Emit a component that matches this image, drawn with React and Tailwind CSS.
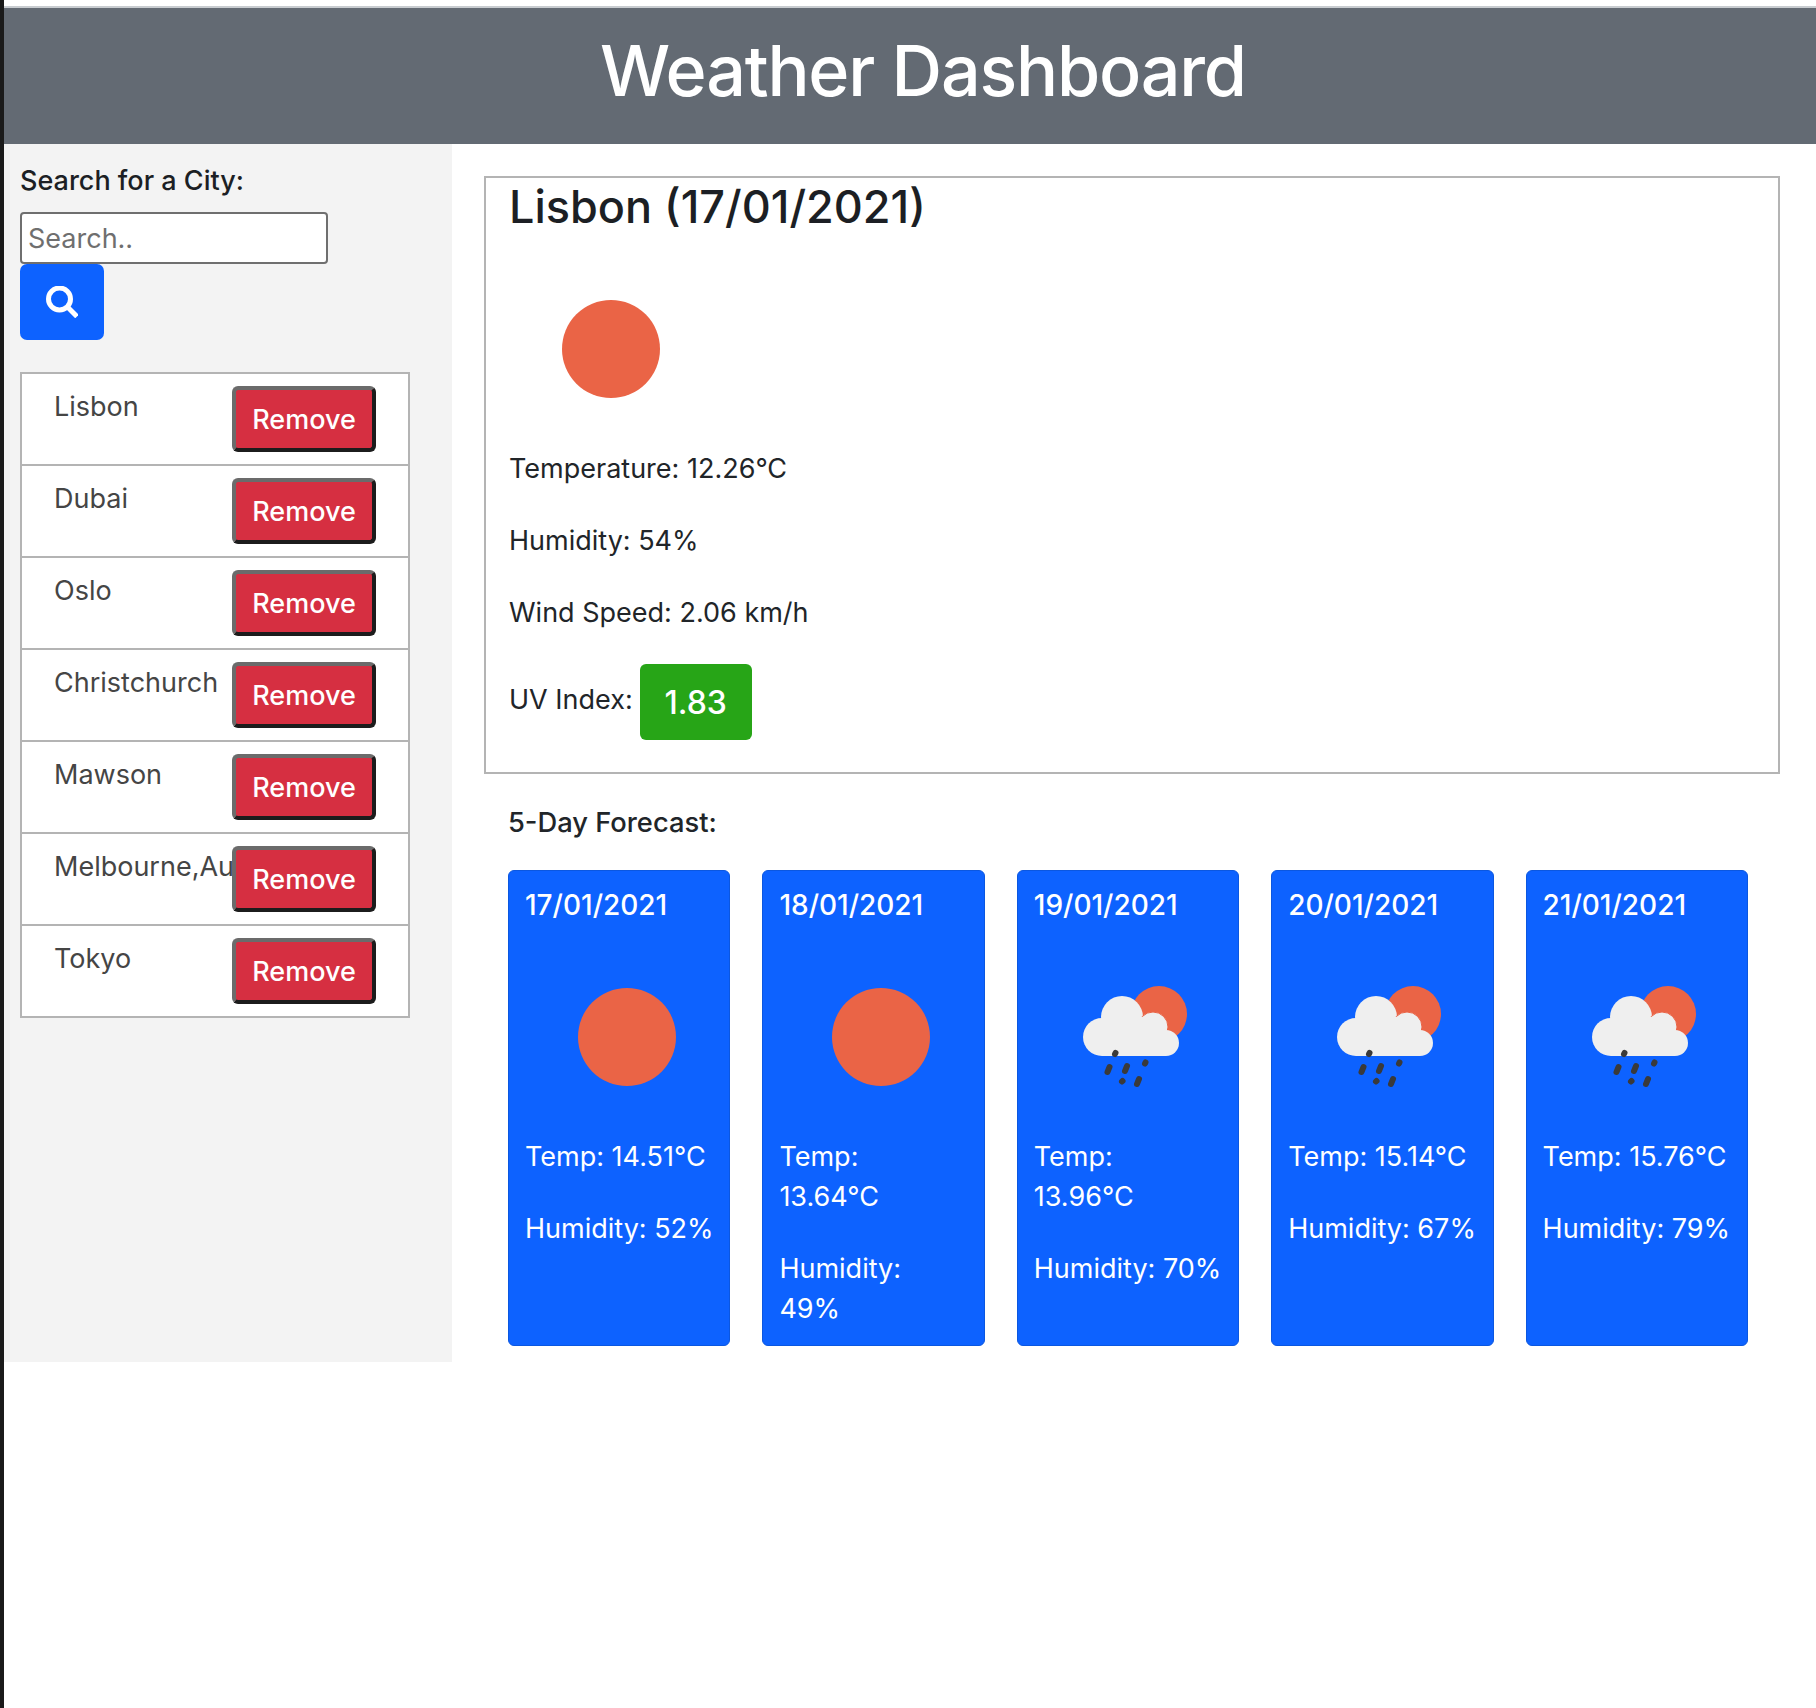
const cities = ['Lisbon', 'Dubai', 'Oslo', 'Christchurch', 'Mawson', 'Melbourne,Australia', 'Tokyo'];

const forecast = [
  { date: '17/01/2021', icon: 'sun', temp: ['Temp: 14.51°C'], humidity: ['Humidity: 52%'] },
  { date: '18/01/2021', icon: 'sun', temp: ['Temp:', '13.64°C'], humidity: ['Humidity:', '49%'] },
  { date: '19/01/2021', icon: 'rain', temp: ['Temp:', '13.96°C'], humidity: ['Humidity: 70%'] },
  { date: '20/01/2021', icon: 'rain', temp: ['Temp: 15.14°C'], humidity: ['Humidity: 67%'] },
  { date: '21/01/2021', icon: 'rain', temp: ['Temp: 15.76°C'], humidity: ['Humidity: 79%'] },
];

const SunIcon = () => (
  <svg width="200" height="200" viewBox="0 0 200 200" className="block shrink-0">
    <circle cx="102" cy="100" r="49" fill="#ea6446" />
  </svg>
);

const RainIcon = () => (
  <svg width="200" height="200" viewBox="0 0 200 200" className="block shrink-0">
    <circle cx="125" cy="77" r="28" fill="#ea6446" />
    <g fill="#efefef">
      <circle cx="88" cy="80" r="21" />
      <circle cx="119" cy="90" r="15" stroke="#ea6446" strokeWidth="1" />
      <circle cx="68" cy="100" r="19" />
      <circle cx="132" cy="106" r="13" />
      <rect x="68" y="93" width="64" height="26" />
      <rect x="69" y="80" width="40" height="20" />
    </g>
    <g stroke="#3a3a3a" strokeWidth="6" strokeLinecap="round">
      <line x1="81.5" y1="116" x2="81" y2="117" />
      <line x1="75.5" y1="130" x2="73.5" y2="135" />
      <line x1="93" y1="129" x2="91" y2="134" />
      <line x1="111.5" y1="125.5" x2="111" y2="126.5" />
      <line x1="88.5" y1="144" x2="88" y2="144.5" />
      <line x1="105" y1="142" x2="103" y2="147" />
    </g>
  </svg>
);

const App = () => {
  return (
    <div className="min-h-[1708px] border-l-4 border-[#1a1a1a] bg-white font-['Inter',sans-serif] text-[#212529]">
      <div className="h-[6px] bg-white"></div>
      <div className="h-[2px] bg-[#c8ccd0]"></div>
      <header className="h-[136px] bg-[#636a73] pl-[26px] text-center">
        <h1 className="text-[70px] leading-[126px] font-medium tracking-[-1.2px] text-white">Weather Dashboard</h1>
      </header>

      <div className="flex items-start">
        <aside className="h-[1218px] w-[448px] shrink-0 bg-[#f3f3f3] pl-4 pt-[19px]">
          <label className="block text-[27px] leading-9 font-medium text-[#1c1f24]">Search for a City:</label>
          <input
            placeholder="Search.."
            className="mt-[13px] block h-[52px] w-[308px] rounded-[4px] border-2 border-[#6f6f6f] bg-white px-[6px] text-[27px] text-[#555] placeholder:text-[#6f6f6f] outline-none"
          />
          <button className="flex h-[76px] w-[84px] items-center justify-center rounded-[7px] bg-[#0d62ff]">
            <svg width="32" height="32" viewBox="0 0 32 32" fill="none" stroke="white" strokeWidth="5">
              <circle cx="13.5" cy="13" r="11" />
              <line x1="21.5" y1="21" x2="31" y2="30.5" />
            </svg>
          </button>

          <ul className="mt-8 w-[390px] border-2 border-b-0 border-[#b4b4b4] bg-white">
            {cities.map((city) => (
              <li key={city} className="flex h-[92px] border-b-2 border-[#b4b4b4] pt-3">
                <span className="mt-px ml-[32px] h-10 w-[178px] overflow-hidden text-[27px] leading-10 whitespace-nowrap text-[#454545]">{city}</span>
                <button className="h-[66px] w-[144px] rounded-[6px] border-4 border-t-[#6b6b6b] border-l-[#6b6b6b] border-r-[#1c1c1c] border-b-[#1c1c1c] bg-[#d62f41] pt-[3px] text-[27px] font-medium text-white">
                  Remove
                </button>
              </li>
            ))}
          </ul>
        </aside>

        <main className="w-[1328px] flex-none pl-8 pt-8">
          <section className="h-[598px] border-2 border-[#b4b4b4] pl-[23px]">
            <h2 className="text-[45px] leading-[58px] font-medium text-[#1c1f24]">Lisbon (17/01/2021)</h2>
            <div className="mt-[13px]"><SunIcon /></div>
            <p className="text-[27px] leading-10">Temperature: 12.26°C</p>
            <p className="mt-8 text-[27px] leading-10">Humidity: 54%</p>
            <p className="mt-8 text-[27px] leading-10">Wind Speed: 2.06 km/h</p>
            <div className="mt-[31px] flex items-center gap-[7px]">
              <span className="pb-1 text-[27px] leading-10">UV Index:</span>
              <span className="flex h-[76px] w-[112px] items-center justify-center rounded-[6px] bg-[#27a517] pt-px text-[32px] font-medium text-white">1.83</span>
            </div>
          </section>

          <h3 className="mt-[31px] ml-6 text-[27.3px] leading-9 font-medium">5-Day Forecast:</h3>
          <div className="mt-[29px] ml-6 flex gap-8">
            {forecast.map((day) => (
              <div key={day.date} className="h-[476px] w-[222.4px] shrink-0 rounded-[6px] border border-[#0b57e0] bg-[#0d62ff] px-4 pt-4 text-white">
                <div className="text-[28px] leading-9 font-medium whitespace-nowrap">{day.date}</div>
                <div className="mt-[14px]">{day.icon === 'sun' ? <SunIcon /> : <RainIcon />}</div>
                <p className="text-[27px] leading-10 whitespace-nowrap">
                  {day.temp.map((line) => <span key={line} className="block">{line}</span>)}
                </p>
                <p className="mt-8 text-[27px] leading-10 whitespace-nowrap">
                  {day.humidity.map((line) => <span key={line} className="block">{line}</span>)}
                </p>
              </div>
            ))}
          </div>
        </main>
      </div>
    </div>
  );
};

export default App;
